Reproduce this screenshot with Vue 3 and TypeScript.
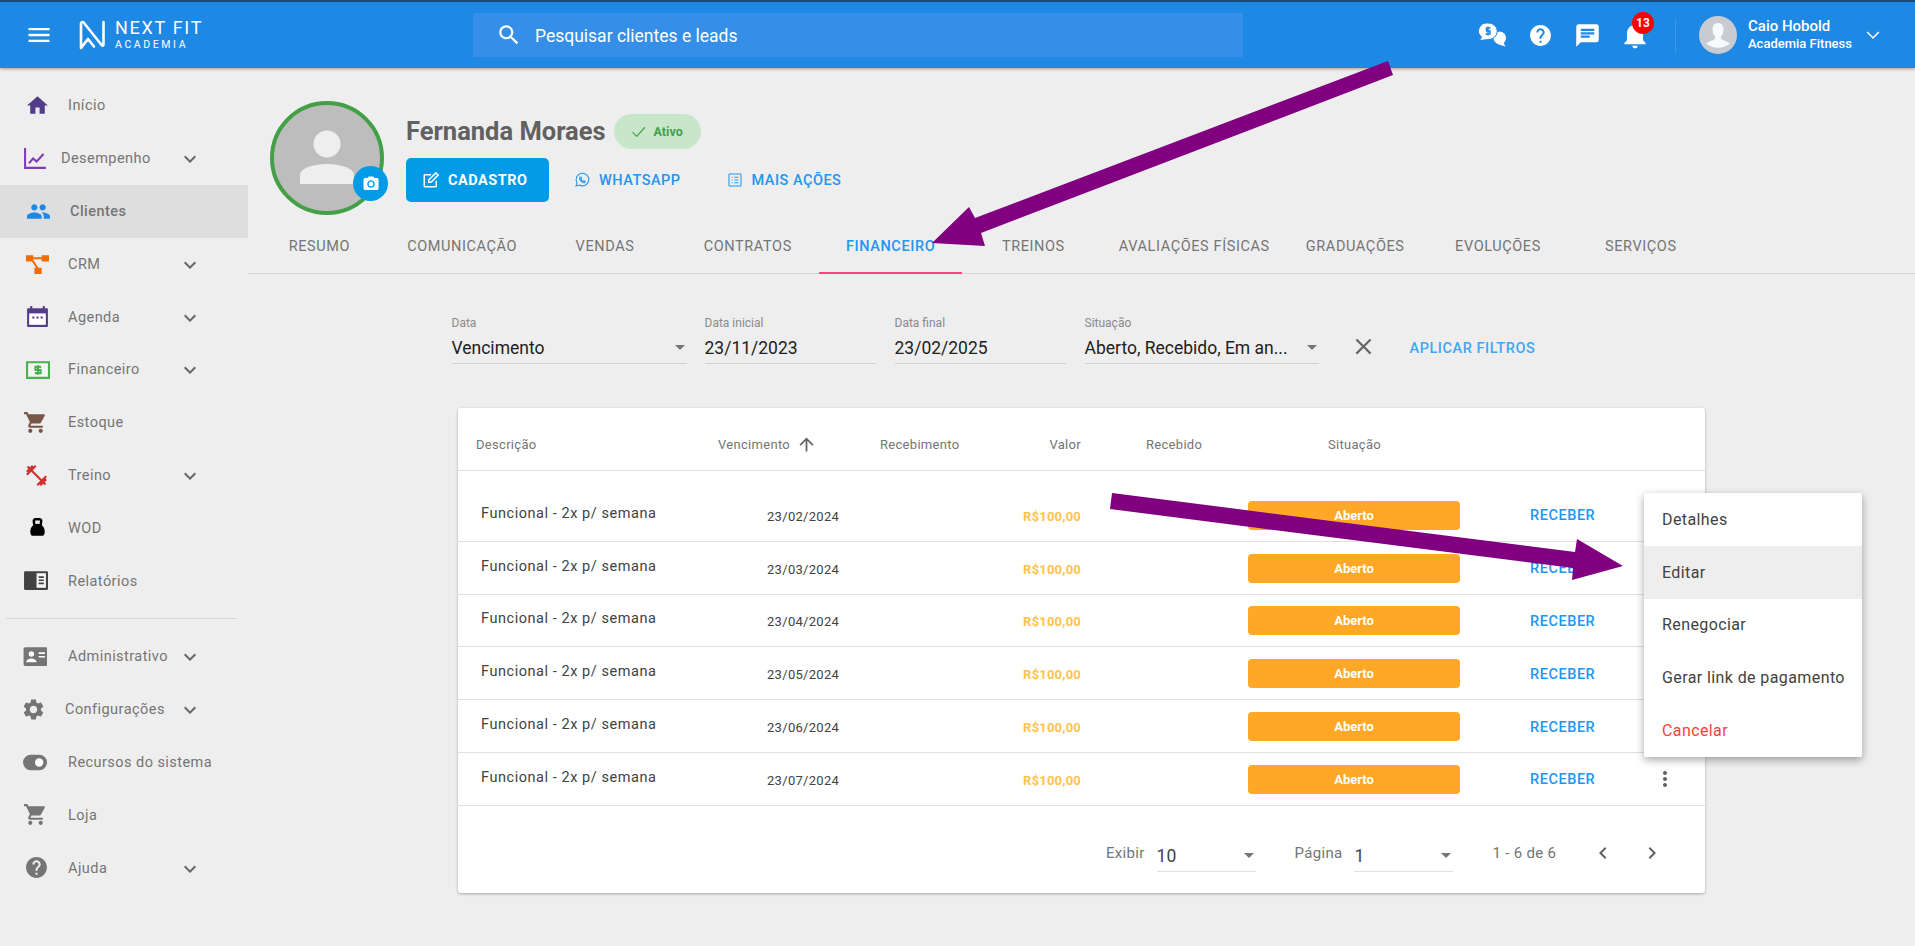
<script setup lang="ts">
interface Shape { d: string; fill?: string; stroke?: string; sw?: number }
interface NavItem { label: string; icon: Shape[]; gap: number; chev?: boolean; active?: boolean; left?: number }

const G = '#757575'
const chevron = 'M16.59 8.59L12 13.17 7.41 8.59 6 10l6 6 6-6z'
const cart = 'M7 18c-1.1 0-1.99.9-1.99 2S5.9 22 7 22s2-.9 2-2-.9-2-2-2zM1 2v2h2l3.6 7.59-1.35 2.45c-.16.28-.25.61-.25.96 0 1.1.9 2 2 2h12v-2H7.42c-.14 0-.25-.11-.25-.25l.03-.12.9-1.63h7.45c.75 0 1.41-.41 1.75-1.03l3.58-6.49c.08-.14.12-.31.12-.48 0-.55-.45-1-1-1H5.21l-.94-2H1zm16 16c-1.1 0-1.99.9-1.99 2s.89 2 1.99 2 2-.9 2-2-.9-2-2-2z'
const help = 'M12 2C6.48 2 2 6.48 2 12s4.48 10 10 10 10-4.48 10-10S17.52 2 12 2zm1 17h-2v-2h2v2zm2.07-7.75l-.9.92C13.45 12.9 13 13.5 13 15h-2v-.5c0-1.1.45-2.1 1.17-2.83l1.24-1.26c.37-.36.59-.86.59-1.41 0-1.1-.9-2-2-2s-2 .9-2 2H8c0-2.21 1.79-4 4-4s4 1.79 4 4c0 .88-.36 1.68-.93 2.25z'

const mainNav: NavItem[] = [
  { label: 'Início', gap: 68, icon: [{ d: 'M10 20v-6h4v6h5v-8h3L12 3 2 12h3v8z', fill: '#553c8b' }] },
  { label: 'Desempenho', gap: 61, chev: true, icon: [{ d: 'M1 2h2v18h19v2H1z', fill: '#7e3db5' }, { d: 'M5 16l4.5-5.5 3.5 3L19 7l1.4 1.4-7.2 8-3.5-3-3.2 3.8z', fill: '#7e3db5' }], left: 23 },
  { label: 'Clientes', gap: 70, active: true, icon: [{ d: 'M16 11c1.66 0 2.99-1.34 2.99-3S17.66 5 16 5c-1.66 0-3 1.34-3 3s1.34 3 3 3zm-8 0c1.66 0 2.99-1.34 2.99-3S9.66 5 8 5C6.34 5 5 6.34 5 8s1.34 3 3 3zm0 2c-2.33 0-7 1.17-7 3.5V19h14v-2.5c0-2.33-4.67-3.5-7-3.5zm8 0c-.29 0-.62.02-.97.05 1.16.84 1.97 1.97 1.97 3.45V19h6v-2.5c0-2.33-4.67-3.5-7-3.5z', fill: '#1e88e5' }], left: 26 },
  { label: 'CRM', gap: 68, chev: true, icon: [{ d: 'M1 4h7v6H1z M16 4h7v6h-7z M8 6h8v2H8z M9 16h7v6H9z M6 9l1.5-1 6 9-1.5 1z', fill: '#ef6c00' }] },
  { label: 'Agenda', gap: 68, chev: true, icon: [
    { d: 'M3 4h2V2h2v2h10V2h2v2h2a1 1 0 0 1 1 1v16a1 1 0 0 1-1 1H3a1 1 0 0 1-1-1V5a1 1 0 0 1 1-1z', fill: '#553c8b' },
    { d: 'M4 9h16v11H4z', fill: '#fff' },
    { d: 'M7 12h2v2H7z M11 12h2v2h-2z M15 12h2v2h-2z', fill: '#553c8b' },
  ] },
  { label: 'Financeiro', gap: 68, chev: true, icon: [
    { d: 'M2 5h21v15H2z', fill: '#f5f5f5', stroke: '#4caf50', sw: 2 },
    { d: 'M15.5 9.5h-5.5v3h5v3H9.5 M12.5 8v9', fill: 'none', stroke: '#4caf50', sw: 2 },
  ] },
  { label: 'Estoque', gap: 68, icon: [{ d: cart, fill: '#795548' }], left: 23 },
  { label: 'Treino', gap: 68, chev: true, icon: [{ d: 'M20.57 14.86L22 13.43 20.57 12 17 15.57 8.43 7 12 3.43 10.57 2 9.14 3.43 7.71 2 5.57 4.14 4.14 2.71 2.71 4.14l1.43 1.43L2 7.71l1.43 1.43L2 10.57 3.43 12 7 8.43 15.57 17 12 20.57 13.43 22l1.43-1.43L16.29 22l2.14-2.14 1.43 1.43 1.43-1.43-1.43-1.43L22 16.29z', fill: '#d32f2f' }], left: 24 },
  { label: 'WOD', gap: 68, icon: [
    { d: 'M5 15.5a7 7 0 1 1 14 0a7 7 0 0 1-1.5 4.5h-11A7 7 0 0 1 5 15.5z', fill: '#000' },
    { d: 'M9 10L8.5 6a1.6 1.6 0 0 1 1.6-2h3.8a1.6 1.6 0 0 1 1.6 2L15 10', fill: 'none', stroke: '#000', sw: 2.4 },
  ] },
  { label: 'Relatórios', gap: 68, icon: [
    { d: 'M2 3h21a1 1 0 0 1 1 1v16a1 1 0 0 1-1 1H2a1 1 0 0 1-1-1V4a1 1 0 0 1 1-1z', fill: '#424242' },
    { d: 'M13 5h9v14h-9z', fill: '#f5f5f5' },
    { d: 'M15 8h5v1.5h-5z M15 11h5v1.5h-5z M15 14h5v1.5h-5z', fill: '#424242' },
  ], left: 23 },
]

const bottomNav: NavItem[] = [
  { label: 'Administrativo', gap: 68, chev: true, icon: [
    { d: 'M3 3h20a1.5 1.5 0 0 1 1.5 1.5v15a1.5 1.5 0 0 1-1.5 1.5H3a1.5 1.5 0 0 1-1.5-1.5v-15A1.5 1.5 0 0 1 3 3z', fill: G },
    { d: 'M9 7a2.6 2.6 0 1 1 0 5.2A2.6 2.6 0 0 1 9 7z M4 17.5c0-2.2 3-3.5 5-3.5s5 1.3 5 3.5z M16 8h6v1.5h-6z M16 11.5h6V13h-6z', fill: '#fff' },
  ], left: 22 },
  { label: 'Configurações', gap: 65, chev: true, icon: [{ d: 'M19.14 12.94c.04-.3.06-.61.06-.94 0-.32-.02-.64-.07-.94l2.03-1.58c.18-.14.23-.41.12-.61l-1.92-3.32c-.12-.22-.37-.29-.59-.22l-2.39.96c-.5-.38-1.03-.7-1.62-.94l-.36-2.54c-.04-.24-.24-.41-.48-.41h-3.84c-.24 0-.43.17-.47.41l-.36 2.54c-.59.24-1.13.57-1.62.94l-2.39-.96c-.22-.08-.47 0-.59.22L2.74 8.87c-.12.21-.08.47.12.61l2.03 1.58c-.05.3-.09.63-.09.94s.02.64.07.94l-2.03 1.58c-.18.14-.23.41-.12.61l1.92 3.32c.12.22.37.29.59.22l2.39-.96c.5.38 1.03.7 1.62.94l.36 2.54c.05.24.24.41.48.41h3.84c.24 0 .44-.17.47-.41l.36-2.54c.59-.24 1.13-.56 1.62-.94l2.39.96c.22.08.47 0 .59-.22l1.92-3.32c.12-.22.07-.47-.12-.61l-2.01-1.58zM12 15.6c-1.98 0-3.6-1.62-3.6-3.6s1.62-3.6 3.6-3.6 3.6 1.62 3.6 3.6-1.62 3.6-3.6 3.6z', fill: G }], left: 21 },
  { label: 'Recursos do sistema', gap: 68, icon: [
    { d: 'M8.5 4.5h8a7.5 7.5 0 0 1 0 15h-8a7.5 7.5 0 0 1 0-15z', fill: G },
    { d: 'M16.5 8a4 4 0 1 1 0 8 4 4 0 0 1 0-8z', fill: '#fff' },
  ], left: 22 },
  { label: 'Loja', gap: 68, icon: [{ d: cart, fill: G }], left: 23 },
  { label: 'Ajuda', gap: 68, chev: true, icon: [{ d: help, fill: G }], left: 24 },
]

const tabs: { label: string; wide?: boolean }[] = [
  { label: 'RESUMO' }, { label: 'COMUNICAÇÃO' }, { label: 'VENDAS' }, { label: 'CONTRATOS' }, { label: 'FINANCEIRO' },
  { label: 'TREINOS' }, { label: 'AVALIAÇÕES FÍSICAS', wide: true }, { label: 'GRADUAÇÕES' }, { label: 'EVOLUÇÕES' }, { label: 'SERVIÇOS' },
]
const dates = ['23/02/2024', '23/03/2024', '23/04/2024', '23/05/2024', '23/06/2024', '23/07/2024']
const menu = ['Detalhes', 'Editar', 'Renegociar', 'Gerar link de pagamento', 'Cancelar']
</script>

<template>
  <div class="page">
    <header class="topbar">
      <svg class="burger" viewBox="0 0 24 24"><path d="M3 18h18v-2H3v2zm0-5h18v-2H3v2zm0-7v2h18V6H3z" /></svg>
      <div class="logo">
        <svg class="logo-n" viewBox="0 0 28 32"><path d="M3 28V4.5a1.5 1.5 0 0 1 2.6-1L24 26.5a1 1 0 0 0 1.5-.7V3 M3 29l7-9 6 7.5" /></svg>
        <div class="logo-text"><div class="logo-main">NEXT FIT</div><div class="logo-sub">ACADEMIA</div></div>
      </div>
      <div class="search">
        <svg viewBox="0 0 24 24"><path d="M15.5 14h-.79l-.28-.27C15.41 12.59 16 11.11 16 9.5 16 5.91 13.09 3 9.5 3S3 5.91 3 9.5 5.91 16 9.5 16c1.61 0 3.09-.59 4.23-1.57l.27.28v.79l5 4.99L20.49 19l-4.99-5zm-6 0C7.01 14 5 11.99 5 9.5S7.01 5 9.5 5 14 7.01 14 9.5 11.99 14 9.5 14z" /></svg>
        <span>Pesquisar clientes e leads</span>
      </div>
      <div class="actions">
        <svg class="act act-money" viewBox="0 0 30 26">
          <path d="M19 21.5a7 6.5 0 0 1 3-12 7 7 0 0 1 6 6.5 6.5 6.5 0 0 1-2.300 5l1.800 3.500-5-1.500a7 7 0 0 1-3.500-1.500z" />
          <path d="M10 1a8.500 8 0 0 1 1 16.500l-9.500 1 2-3.500A8.500 8 0 0 1 10 1z" stroke="#1e88e5" stroke-width="1" />
          <path d="M12.500 6H8.500v3h3.500v3H7.500 M10 4.500v9" fill="none" stroke="#1e88e5" stroke-width="1.500" />
        </svg>
        <svg class="act act-help" viewBox="0 0 24 24"><path :d="help" /></svg>
        <svg class="act act-chat" viewBox="0 0 24 24"><path d="M20 2H4c-1.100 0-1.990.900-1.990 2L2 22l4-4h14c1.100 0 2-.900 2-2V4c0-1.100-.900-2-2-2zM6 9h12v2H6V9zm8 5H6v-2h8v2zm4-6H6V6h12v2z" /></svg>
        <div class="bell">
          <svg viewBox="0 0 24 24"><path d="M12 22c1.100 0 2-.900 2-2h-4c0 1.100.890 2 2 2zm6-6v-5c0-3.070-1.640-5.640-4.500-6.320V4c0-.830-.670-1.500-1.500-1.500s-1.500.670-1.500 1.500v.680C7.630 5.360 6 7.920 6 11v5l-2 2v1h16v-1l-2-2z" /></svg>
          <span class="bell-count">13</span>
        </div>
        <div class="vline"></div>
        <svg class="user-pic" viewBox="0 0 38 38">
          <circle cx="19" cy="19" r="19" fill="#c8cbd0" />
          <path d="M19 7c3.600 0 5.500 2.800 5.500 6.500 0 3-1.200 5.500-2.500 7v2c1 1.800 6 2.500 9 5a19 19 0 0 1-24 0c3-2.500 8-3.200 9-5v-2c-1.300-1.500-2.500-4-2.500-7C13.500 9.800 15.400 7 19 7z" fill="#f7f9fc" />
        </svg>
        <div class="user-text"><div class="user-name">Caio Hobold</div><div class="user-org">Academia Fitness</div></div>
        <svg class="user-chev" viewBox="0 0 24 24"><path d="M5 8.500l7 7 7-7" /></svg>
      </div>
    </header>

    <div class="body">
      <aside class="sidebar">
        <nav class="nav-group">
          <a v-for="it in mainNav" :key="it.label" class="nav-item" :class="{ active: it.active }">
            <svg class="nav-icon" viewBox="0 0 24 24" :style="{ left: (it.left ?? 25) + 'px' }">
              <path v-for="(s, i) in it.icon" :key="i" :d="s.d" :fill="s.fill" :stroke="s.stroke" :stroke-width="s.sw" />
            </svg>
            <span class="nav-label" :style="{ marginLeft: it.gap + 'px' }">{{ it.label }}</span>
            <svg v-if="it.chev" class="nav-chev" viewBox="0 0 24 24"><path :d="chevron" /></svg>
          </a>
        </nav>
        <div class="nav-divider"></div>
        <nav class="nav-group">
          <a v-for="it in bottomNav" :key="it.label" class="nav-item">
            <svg class="nav-icon" viewBox="0 0 24 24" :style="{ left: (it.left ?? 25) + 'px' }">
              <path v-for="(s, i) in it.icon" :key="i" :d="s.d" :fill="s.fill" />
            </svg>
            <span class="nav-label" :style="{ marginLeft: it.gap + 'px' }">{{ it.label }}</span>
            <svg v-if="it.chev" class="nav-chev" viewBox="0 0 24 24"><path :d="chevron" /></svg>
          </a>
        </nav>
      </aside>

      <main class="main">
        <section class="profile">
          <div class="avatar">
            <svg viewBox="0 0 114 114">
              <circle cx="57" cy="57" r="55" fill="#bdbdbd" stroke="#43a047" stroke-width="4" />
              <circle cx="57" cy="43" r="13.500" fill="#eeeeee" />
              <path d="M30 83v-9c0-7 14-11 27-11s27 4 27 11v9z" fill="#eeeeee" />
            </svg>
            <span class="cam">
              <svg viewBox="0 0 24 24"><path d="M12 8.800a3.200 3.200 0 1 0 0 6.400 3.200 3.200 0 0 0 0-6.400z M9 2L7.170 4H4c-1.100 0-2 .900-2 2v12c0 1.100.900 2 2 2h16c1.100 0 2-.900 2-2V6c0-1.100-.900-2-2-2h-3.170L15 2H9zm3 15c-2.760 0-5-2.240-5-5s2.240-5 5-5 5 2.240 5 5-2.240 5-5 5z" /></svg>
            </span>
          </div>
          <div class="info">
            <div class="name-row">
              <h1>Fernanda Moraes</h1>
              <span class="status">
                <svg viewBox="0 0 24 24"><path d="M3.500 13l6 6L21 6" /></svg>
                Ativo
              </span>
            </div>
            <div class="btn-row">
              <button class="btn-primary">
                <svg viewBox="0 0 24 24"><path d="M19 13v7a1 1 0 0 1-1 1H4a1 1 0 0 1-1-1V6a1 1 0 0 1 1-1h8" /><path d="M9 12L18.500 2.500l3 3L12 15H9z" /></svg>
                CADASTRO
              </button>
              <button class="btn-text btn-wa">
                <svg viewBox="0 0 24 24"><path d="M3 21l1.500-5A9.500 9.500 0 1 1 8 19.500z" /><path d="M9 8c-1 1-1 2.500 1 5s4 3.500 5.500 3 1.500-1.500 1.300-2l-2-1-1 1c-1-.300-2.800-2-3.300-3.300l.8-1-1-2z" /></svg>
                WHATSAPP
              </button>
              <button class="btn-text btn-more">
                <svg viewBox="0 0 24 24"><path d="M4 3h16a1 1 0 0 1 1 1v16a1 1 0 0 1-1 1H4a1 1 0 0 1-1-1V4a1 1 0 0 1 1-1z" /><path d="M7 8h1.500M7 12h1.500M7 16h1.500M11 8h6M11 12h6M11 16h6" /></svg>
                MAIS AÇÕES
              </button>
            </div>
          </div>
        </section>

        <div class="tabs">
          <div v-for="t in tabs" :key="t.label" class="tab" :class="{ wide: t.wide, current: t.label === 'FINANCEIRO' }">{{ t.label }}</div>
        </div>

        <section class="filters">
          <div class="field f-data"><label>Data</label><div class="val">Vencimento<i class="caret"></i></div></div>
          <div class="field f-date"><label>Data inicial</label><div class="val">23/11/2023</div></div>
          <div class="field f-date"><label>Data final</label><div class="val">23/02/2025</div></div>
          <div class="field f-sit"><label>Situação</label><div class="val">Aberto, Recebido, Em an...<i class="caret"></i></div></div>
          <svg class="clear" viewBox="0 0 24 24"><path d="M19 6.410L17.590 5 12 10.590 6.410 5 5 6.410 10.590 12 5 17.590 6.410 19 12 13.410 17.590 19 19 17.590 13.410 12z" /></svg>
          <span class="apply">APLICAR FILTROS</span>
        </section>

        <section class="card">
          <div class="thead">
            <span>Descrição</span>
            <span class="th-sort">Vencimento
              <svg viewBox="0 0 24 24"><path d="M4 12l1.410 1.410L11 7.830V20h2V7.830l5.580 5.590L20 12l-8-8-8 8z" /></svg>
            </span>
            <span>Recebimento</span>
            <span class="th-right">Valor</span>
            <span>Recebido</span>
            <span>Situação</span>
          </div>
          <div class="tbody">
            <div v-for="d in dates" :key="d" class="row">
              <span class="c-desc">Funcional - 2x p/ semana</span>
              <span class="c-date">{{ d }}</span>
              <span class="c-val">R$100,00</span>
              <span class="c-badge">Aberto</span>
              <span class="c-rec">RECEBER</span>
              <svg class="c-more" viewBox="0 0 24 24"><path d="M12 8c1.100 0 2-.900 2-2s-.900-2-2-2-2 .900-2 2 .900 2 2 2zm0 2c-1.100 0-2 .900-2 2s.900 2 2 2 2-.900 2-2-.900-2-2-2zm0 6c-1.100 0-2 .900-2 2s.900 2 2 2 2-.900 2-2-.900-2-2-2z" /></svg>
            </div>
          </div>
          <div class="pager">
            <span class="p-label">Exibir</span>
            <div class="p-select">10<i class="caret"></i></div>
            <span class="p-label p-pg">Página</span>
            <div class="p-select">1<i class="caret"></i></div>
            <span class="p-label p-range">1 - 6 de 6</span>
            <svg class="p-nav" viewBox="0 0 24 24"><path d="M15.410 7.410L14 6l-6 6 6 6 1.410-1.410L10.830 12z" /></svg>
            <svg class="p-nav p-next" viewBox="0 0 24 24"><path d="M10 6L8.590 7.410 13.170 12l-4.580 4.590L10 18l6-6z" /></svg>
          </div>
        </section>
      </main>
    </div>

    <ul class="menu">
      <li v-for="m in menu" :key="m" :class="{ hover: m === 'Editar', danger: m === 'Cancelar' }">{{ m }}</li>
    </ul>

    <svg class="arrows" viewBox="0 0 1915 946">
      <polygon points="1388,61 1393,75 981,233 985,246 932,243 969,207 975,218" fill="#800080" />
      <polygon points="1112,493 1110,509 1573,568 1572,580 1623,566 1577,539 1575,552" fill="#800080" />
    </svg>
  </div>
</template>

<style>
html, body { margin: 0; background: #eeeeee; }
</style>

<style scoped>
* { box-sizing: border-box; }
.page { position: relative; width: 1915px; height: 946px; overflow: hidden; background: #eeeeee; font-family: Roboto, "Liberation Sans", sans-serif; color: #757575; }

.topbar { height: 68px; background: #1e88e5; border-top: 2px solid #1d4a7d; box-shadow: 0 1px 3px rgba(0,0,0,.35); display: flex; align-items: center; position: relative; z-index: 2; }
.burger { width: 28px; height: 28px; margin-left: 25px; fill: #fff; flex: none; }
.logo { display: flex; align-items: center; margin-left: 25px; color: #fff; flex: none; width: 395px; }
.logo-n { width: 28px; height: 32px; fill: none; stroke: #fff; stroke-width: 2.600; stroke-linejoin: round; stroke-linecap: round; }
.logo-text { margin-left: 9px; }
.logo-main { font-size: 18px; line-height: 18px; font-weight: 400; letter-spacing: 1.700px; }
.logo-sub { font-size: 10.500px; line-height: 13px; letter-spacing: 2.600px; margin-top: 1px; }
.search { width: 770px; height: 44px; background: #358fe8; display: flex; align-items: center; color: #fff; font-size: 17.500px; flex: none; }
.search svg { width: 26px; height: 26px; fill: #fff; margin-left: 23px; margin-right: 13px; }
.search span { position: relative; top: 1px; }
.actions { display: flex; align-items: center; flex: 1; margin-left: 235px; }
.act { fill: #fff; flex: none; }
.act-money { width: 30px; height: 26px; }
.act-help { width: 25px; height: 25px; margin-left: 20px; }
.act-chat { width: 27px; height: 27px; margin-left: 21px; }
.bell { position: relative; width: 32px; height: 32px; margin-left: 18px; flex: none; }
.bell svg { width: 32px; height: 32px; fill: #fff; }
.bell-count { position: absolute; left: 13px; top: -7px; width: 22px; height: 22px; border-radius: 50%; background: #f00; color: #fff; font-size: 12px; font-weight: 700; display: flex; align-items: center; justify-content: center; }
.vline { width: 1px; height: 33px; background: rgba(255,255,255,.14); margin-left: 24px; flex: none; }
.user-pic { width: 38px; height: 38px; margin-left: 23px; flex: none; }
.user-text { margin-left: 11px; color: #fff; width: 112px; white-space: nowrap; }
.user-name { font-size: 15px; line-height: 18px; font-weight: 500; }
.user-org { font-size: 13px; line-height: 18px; font-weight: 500; }
.user-chev { width: 20px; height: 20px; margin-left: 3px; fill: none; stroke: #fff; stroke-width: 1.800; }

.body { display: flex; }
.sidebar { width: 248px; flex: none; padding-top: 11.500px; }
.nav-item { position: relative; display: flex; align-items: center; height: 52.800px; }
.nav-item.active { background: #dedede; }
.nav-item.active .nav-label { font-weight: 500; }
.nav-icon { position: absolute; width: 25px; height: 25px; top: 13.500px; }
.nav-label { font-size: 14.500px; letter-spacing: .45px; color: #757575; white-space: nowrap; }
.nav-chev { position: absolute; left: 178px; top: 15px; width: 24px; height: 24px; fill: #666; }
.nav-divider { height: 1px; background: #d6d6d6; margin: 11px 10px 11px 6px; width: 231px; }

.main { flex: 1; min-width: 0; }
.profile { display: flex; padding: 33px 0 0 22px; height: 155px; }
.avatar { position: relative; width: 114px; height: 114px; flex: none; }
.avatar > svg { width: 114px; height: 114px; display: block; }
.cam { position: absolute; left: 83px; top: 65px; width: 35px; height: 35px; border-radius: 50%; background: #039be5; display: flex; align-items: center; justify-content: center; }
.cam svg { width: 18px; height: 18px; fill: #fff; }
.info { margin-left: 22px; }
.name-row { display: flex; align-items: center; margin-top: 13px; height: 35px; }
h1 { margin: 0; font-size: 25.500px; font-weight: 700; color: #616161; line-height: 35px; white-space: nowrap; letter-spacing: 0; }
.status { margin-left: 8px; width: 87px; height: 35px; border-radius: 18px; background: #c8e6c9; color: #43a047; font-size: 12.500px; font-weight: 700; display: flex; align-items: center; padding-left: 16px; gap: 7px; }
.status svg { width: 17px; height: 17px; fill: none; stroke: #43a047; stroke-width: 1.600; }
.btn-row { display: flex; align-items: center; margin-top: 9px; }
button { border: 0; background: none; font: inherit; display: flex; align-items: center; padding: 0; font-weight: 500; }
.btn-primary { width: 143px; height: 44px; border-radius: 5px; background: #039be5; color: #fff; font-size: 14.500px; font-weight: 700; letter-spacing: .5px; padding-left: 16px; gap: 8px; }
.btn-primary svg { width: 18px; height: 18px; fill: none; stroke: #fff; stroke-width: 2; }
.btn-text { color: #2196f3; font-size: 14.500px; letter-spacing: .5px; gap: 9px; }
.btn-text svg { width: 16px; height: 16px; fill: none; stroke: #2196f3; stroke-width: 1.600; }
.btn-wa { margin-left: 25px; }
.btn-more { margin-left: 46px; }

.tabs { display: flex; height: 51px; border-bottom: 1px solid #d6d6d6; }
.tab { width: 142.800px; height: 50px; padding-top: 15px; text-align: center; font-size: 14.500px; font-weight: 400; letter-spacing: .6px; color: #757575; white-space: nowrap; flex: none; }
.tab.wide { width: 179px; }
.tab.current { color: #2196f3; border-bottom: 2px solid #ff4081; height: 51px; font-weight: 500; }

.filters { display: flex; align-items: flex-start; margin: 42px 0 0 203.500px; height: 92px; }
.field { flex: none; }
.field label { display: block; font-size: 12px; line-height: 14px; color: #8a8a8a; }
.val { position: relative; height: 33px; margin-top: 1px; padding-top: 6px; font-size: 17.500px; line-height: 22px; color: #212121; border-bottom: 1px solid #d2d2d2; white-space: nowrap; }
.f-data { width: 235px; margin-right: 18px; }
.f-date { width: 171px; margin-right: 19px; }
.f-sit { width: 234px; }
.caret { position: absolute; right: 2px; top: 14px; width: 0; height: 0; border-left: 5px solid transparent; border-right: 5px solid transparent; border-top: 5px solid #757575; }
.clear { width: 27px; height: 27px; margin: 17px 0 0 31px; fill: #666; flex: none; }
.apply { margin: 24px 0 0 33px; font-size: 14.500px; font-weight: 500; letter-spacing: .55px; color: #42a5f5; white-space: nowrap; }

.card { margin-left: 210px; width: 1247px; height: 485px; background: #fff; border-radius: 3px; box-shadow: 0 1px 3px rgba(0,0,0,.3); font-size: 13px; }
.thead { display: grid; grid-template-columns: 242px 162px 141px 125px 182px 1fr; align-items: center; height: 63px; padding: 10px 0 0 18px; border-bottom: 1px solid #e0e0e0; font-size: 13px; letter-spacing: .3px; color: #757575; }
.th-sort { display: flex; align-items: center; gap: 6px; }
.th-sort svg { width: 21px; height: 21px; fill: #616161; }
.th-right { text-align: right; padding-right: 65px; }
.tbody { padding-top: 18px; }
.row { display: grid; grid-template-columns: 309px 160px 154px 167px 212px 180px 50px 15px; align-items: center; height: 52.800px; border-bottom: 1px solid #e0e0e0; }
.c-desc { padding-left: 23px; margin-bottom: 3px; font-size: 14.500px; letter-spacing: .55px; color: #424242; white-space: nowrap; }
.c-date { margin-top: 3px; font-size: 13px; letter-spacing: .3px; color: #424242; }
.c-val { margin-top: 3px; text-align: right; font-size: 13px; font-weight: 700; letter-spacing: .2px; color: #ffc34d; }
.c-badge { grid-column: 5; width: 212px; height: 29px; margin-top: 1px; border-radius: 4px; background: #ffa726; color: #fff; font-size: 13px; font-weight: 700; display: flex; align-items: center; justify-content: center; }
.c-rec { padding-left: 70px; margin-top: 2px; font-size: 14.500px; font-weight: 500; letter-spacing: .55px; color: #2196f3; }
.c-more { width: 24px; height: 24px; fill: #616161; justify-self: center; }
.pager { display: flex; align-items: center; height: 52px; margin-top: 21px; padding-left: 648px; font-size: 15px; letter-spacing: .3px; color: #757575; }
.p-label { flex: none; }
.p-select { position: relative; width: 99px; height: 32px; margin-left: 12px; margin-top: 6px; border-bottom: 1px solid #e0e0e0; font-size: 17.500px; line-height: 32px; color: #424242; flex: none; letter-spacing: 0; }
.p-select .caret { top: 13px; }
.p-pg { margin-left: 39px; }
.p-range { margin-left: 39px; }
.p-nav { width: 24px; height: 24px; fill: #616161; margin-left: 35px; flex: none; }
.p-next { margin-left: 25px; }

.menu { position: absolute; left: 1644px; top: 493px; width: 218px; margin: 0; padding: 0; list-style: none; background: #fff; border-radius: 2px; box-shadow: 0 3px 8px rgba(0,0,0,.35); z-index: 3; }
.menu li { height: 52.800px; padding-left: 18px; display: flex; align-items: center; font-size: 16px; letter-spacing: .4px; color: #424242; white-space: nowrap; }
.menu li.hover { background: #eeeeee; }
.menu li.danger { color: #f44336; }
.arrows { position: absolute; left: 0; top: 0; width: 1915px; height: 946px; z-index: 4; pointer-events: none; }
</style>
